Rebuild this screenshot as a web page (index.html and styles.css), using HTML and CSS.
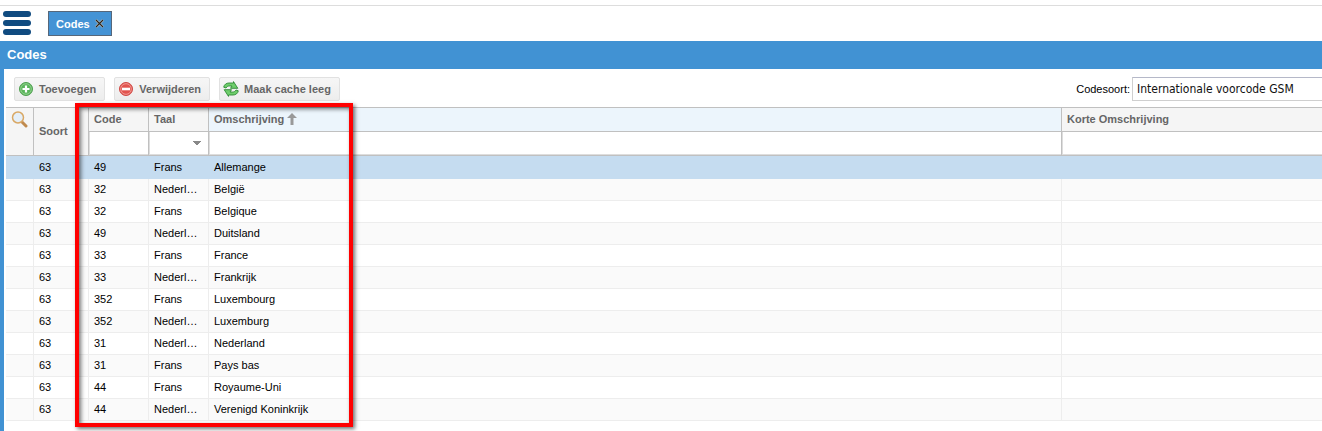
FILE: index.html
```html
<!DOCTYPE html>
<html lang="nl">
<head>
<meta charset="utf-8">
<title>Codes</title>
<link rel="stylesheet" href="styles.css">
</head>
<body>
<header class="topbar">
  <button class="menu" type="button" aria-label="Menu"><span></span><span></span><span></span></button>
  <div class="tab">
    <span>Codes</span>
    <button class="tab-close" type="button" aria-label="Sluiten">
      <svg width="9" height="9" viewBox="0 0 9 9"><path d="M1 1l7 7M8 1l-7 7" stroke="#d5cdbd" stroke-width="2.4"/><path d="M1 1l7 7M8 1l-7 7" stroke="#222" stroke-width="1.2"/></svg>
    </button>
  </div>
</header>
<main class="panel">
  <h1 class="title">Codes</h1>
  <div class="content">
    <div class="toolbar">
      <button class="btn" type="button">
        <svg width="16" height="16" viewBox="0 0 16 16"><circle cx="8" cy="8" r="6.5" fill="#5bb55b" stroke="#4f9f50"/><circle cx="8" cy="8" r="5.3" fill="none" stroke="#8fd08c"/><path d="M8 4.5v7M4.5 8h7" stroke="#fff" stroke-width="2.2"/></svg>
        Toevoegen
      </button>
      <button class="btn" type="button">
        <svg width="16" height="16" viewBox="0 0 16 16"><circle cx="8" cy="8" r="6.5" fill="#e2544f" stroke="#d04a46"/><circle cx="8" cy="8" r="5.3" fill="none" stroke="#f19a94"/><path d="M4 8h8" stroke="#fff" stroke-width="2.6"/></svg>
        Verwijderen
      </button>
      <button class="btn" type="button">
        <svg width="16" height="16" viewBox="0 0 16 16" fill="#6fce6c" stroke="#2f8a35" stroke-width=".9" stroke-linejoin="round"><path d="M.7 6.200C1.200 3.400 3.500 2 6 2H10.500V.6L14.800 7.300H7.500L9 5H6.500C5 5 4 5.400 3 7z"/><path d="M15.300 9.800C14.800 12.600 12.500 14 10 14H5.500V15.400L1.200 8.700H8.500L7 11H9.500C11 11 12 10.600 13 9z"/></svg>
        Maak cache leeg
      </button>
      <div class="field">
        <label for="codesoort">Codesoort:</label>
        <input id="codesoort" type="text" value="Internationale voorcode GSM">
      </div>
    </div>
    <div class="grid">
      <table>
        <colgroup><col class="c-icon"><col class="c-soort"><col class="c-code"><col class="c-taal"><col><col class="c-korte"></colgroup>
        <thead>
          <tr>
            <th rowspan="2" class="search"><button type="button" aria-label="Zoeken"><svg width="17" height="17" viewBox="0 0 17 17"><path d="M10.500 10.500l4.500 4.500" stroke="#c08a4e" stroke-width="3" stroke-linecap="round"/><circle cx="7" cy="6.500" r="5.500" fill="#e4eff9" stroke="#d9a865" stroke-width="1.500"/></svg></button></th>
            <th rowspan="2">Soort</th>
            <th>Code</th>
            <th>Taal</th>
            <th class="sorted">Omschrijving <svg width="10" height="12" viewBox="0 0 10 12"><path d="M5 0l5 5H6.500v7h-3V5H0z" fill="#999"/></svg></th>
            <th>Korte Omschrijving</th>
          </tr>
          <tr class="filters">
            <td><input type="text" aria-label="Filter code"></td>
            <td><select aria-label="Filter taal"><option></option></select></td>
            <td><input type="text" aria-label="Filter omschrijving"></td>
            <td><input type="text" aria-label="Filter korte omschrijving"></td>
          </tr>
        </thead>
        <tbody>
          <tr class="selected"><td></td><td>63</td><td>49</td><td>Frans</td><td>Allemange</td><td></td></tr>
          <tr><td></td><td>63</td><td>32</td><td>Nederlands</td><td>België</td><td></td></tr>
          <tr><td></td><td>63</td><td>32</td><td>Frans</td><td>Belgique</td><td></td></tr>
          <tr><td></td><td>63</td><td>49</td><td>Nederlands</td><td>Duitsland</td><td></td></tr>
          <tr><td></td><td>63</td><td>33</td><td>Frans</td><td>France</td><td></td></tr>
          <tr><td></td><td>63</td><td>33</td><td>Nederlands</td><td>Frankrijk</td><td></td></tr>
          <tr><td></td><td>63</td><td>352</td><td>Frans</td><td>Luxembourg</td><td></td></tr>
          <tr><td></td><td>63</td><td>352</td><td>Nederlands</td><td>Luxemburg</td><td></td></tr>
          <tr><td></td><td>63</td><td>31</td><td>Nederlands</td><td>Nederland</td><td></td></tr>
          <tr><td></td><td>63</td><td>31</td><td>Frans</td><td>Pays bas</td><td></td></tr>
          <tr><td></td><td>63</td><td>44</td><td>Frans</td><td>Royaume-Uni</td><td></td></tr>
          <tr><td></td><td>63</td><td>44</td><td>Nederlands</td><td>Verenigd Koninkrijk</td><td></td></tr>
        </tbody>
      </table>
      <div class="highlight"></div>
    </div>
  </div>
</main>
</body>
</html>
```

FILE: styles.css
```css
* { box-sizing: border-box; }
html, body { height: 100%; }
body {
  margin: 0;
  display: flex;
  flex-direction: column;
  padding-top: 5px;
  overflow: hidden;
  background: #fff;
  font: 11px/16px "Liberation Sans", Arial, sans-serif;
  color: #000;
}
button { font: inherit; padding: 0; border: 0; background: none; }
svg { display: block; }

.topbar {
  display: flex;
  flex: none;
  align-items: flex-start;
  gap: 17px;
  height: 36px;
  padding: 5px 3px 0;
  border-top: 1px solid #ddd;
}
.menu { display: flex; flex-direction: column; gap: 3px; width: 28px; }
.menu span { height: 6px; border-radius: 3px; background: #104b80; }
.tab {
  display: flex;
  align-items: center;
  gap: 5px;
  height: 25px;
  padding: 0 7px;
  border: 1px solid #56677a;
  background: #4493d5;
  color: #fff;
  font-weight: bold;
}

.panel {
  display: flex;
  flex: 1;
  flex-direction: column;
  border-left: 4px solid #4192d3;
}
.title {
  margin: 0 0 0 -4px;
  padding: 6px 7px;
  background: #4192d3;
  color: #fff;
  font-size: 13px;
  line-height: 16px;
}
.content { flex: 1; padding-left: 2px; background: #fff; }
.toolbar { display: flex; align-items: center; gap: 9px; height: 38px; padding: 2px 0 0 8px; }
.btn {
  display: flex;
  align-items: center;
  gap: 5px;
  height: 24px;
  padding: 0 8px 0 3px;
  border: 1px solid #e1e1e1;
  border-radius: 2px;
  background: linear-gradient(#f6f6f6, #ededed);
  color: #666;
  font-weight: bold;
}
.field { display: flex; align-items: center; gap: 2px; margin-left: auto; }
.field input {
  width: 190px;
  height: 24px;
  padding: 0 4px;
  border: 1px solid #cfcfcf;
  border-top-color: #b5b8c8;
  border-right: 0;
  font: 12px "DejaVu Sans Condensed", Tahoma, sans-serif;
  color: #111;
}

.grid { position: relative; }
table { width: 100%; table-layout: fixed; border-spacing: 0; border-top: 1px solid #c0c0c0; }
.c-icon { width: 28px; }
.c-soort { width: 55px; }
.c-code, .c-taal { width: 60px; }
.c-korte { width: 260px; }
th, td {
  padding: 0 5px 1px;
  overflow: hidden;
  text-align: left;
  text-overflow: ellipsis;
  white-space: nowrap;
}
th {
  height: 24px;
  border-right: 1px solid #c0c0c0;
  border-bottom: 1px solid #c0c0c0;
  background: #f5f5f5;
  color: #666;
}
th:last-child, td:last-child { border-right: 0; }
th svg { display: inline-block; vertical-align: -2px; }
.sorted { background: #ecf5fc; }
.search { vertical-align: top; padding-top: 3px; }
.filters td {
  height: 24px;
  padding: 0;
  border-right: 1px solid #c0c0c0;
  border-bottom: 1px solid #c0c0c0;
}
.filters td:last-child { border-right: 0; }
.filters input, .filters select {
  display: block;
  width: 100%;
  height: 23px;
  padding: 0 4px;
  border: 1px solid #ddd;
  border-width: 0 0 1px 1px;
  border-radius: 0;
  background: #fff;
  font: inherit;
}
.filters select {
  appearance: none;
  background:
    linear-gradient(to top right, transparent 50%, #888 50%) no-repeat right 11px center / 4px 4px,
    linear-gradient(to top left, transparent 50%, #888 50%) no-repeat right 7px center / 4px 4px,
    #fff;
}
tbody td { height: 22px; padding-bottom: 2px; border-right: 1px solid #ededed; border-bottom: 1px solid #ededed; }
tbody tr:nth-child(even) { background: #fafafa; }
tbody .selected td { height: 23px; padding-bottom: 1px; border-color: #c5dcf0; background: #c5dcf0; }
.highlight {
  position: absolute;
  top: -4px;
  bottom: -6px;
  left: 69px;
  width: 278px;
  border: 4px solid #f00;
  box-shadow: 2px 2px 4px rgba(0, 0, 0, .55), inset 2px 2px 4px rgba(0, 0, 0, .55);
  pointer-events: none;
}
```
